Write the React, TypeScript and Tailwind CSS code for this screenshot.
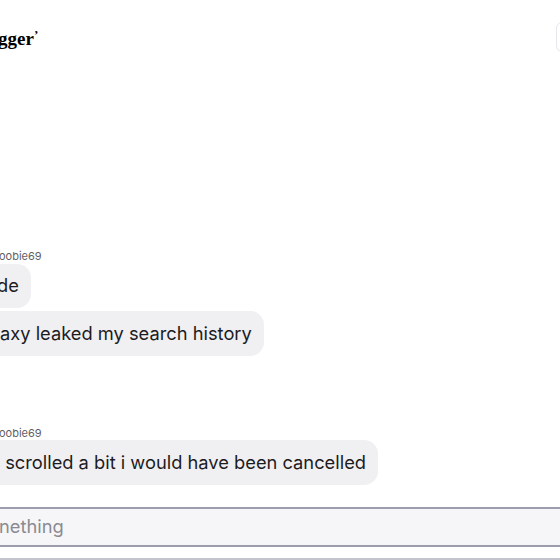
import React from "react";

export default function App() {
  return (
    <div className="w-[560px] h-[560px] overflow-hidden bg-white flex flex-col font-['Inter',sans-serif] text-[#1c1c1e]">
      <div className="flex items-center justify-between h-[30px] mt-[22px]">
        <div className="font-['Liberation_Serif',serif] font-bold text-[19px] leading-none -ml-[2px] mt-[2px] text-black">
          gger<span className="text-[13px] align-top relative top-[-1px]">’</span>
        </div>
        <div className="w-[40px] h-[30px] border border-gray-200 rounded-md bg-white -mr-[36px]" />
      </div>
      <div className="flex flex-col items-start mt-[197px]">
        <div className="text-[11px] leading-[14px] text-[#5f5f66] -ml-[1px]">oobie69</div>
        <div className="mt-[1px] h-[44px] flex items-center bg-[#f0f0f3] rounded-[14px] -ml-[19px] pl-[16px] pr-[12px] text-[18.3px]">
          de
        </div>
        <div className="mt-[3px] h-[45px] flex items-center bg-[#f0f0f3] rounded-[14px] -ml-[16px] pl-[16px] pr-[12px] text-[18.3px]">
          axy leaked my search history
        </div>
        <div className="mt-[70px] text-[11px] leading-[14px] text-[#5f5f66] -ml-[1px]">oobie69</div>
        <div className="h-[45px] flex items-center bg-[#f0f0f3] rounded-[14px] -ml-[16px] pl-[16px] pr-[12px] text-[18.3px] whitespace-pre">
          {" scrolled a bit i would have been cancelled"}
        </div>
      </div>
      <div className="mt-[22px] h-[41px] border-y-2 border-[#9c9cad] bg-[#f6f6f9] flex items-center text-[18.3px] text-[#8a8a90] -ml-[1px]">
        nething
      </div>
      <div className="mt-[11px] border-t-2 border-[#c4c4cf]" />
    </div>
  );
}
